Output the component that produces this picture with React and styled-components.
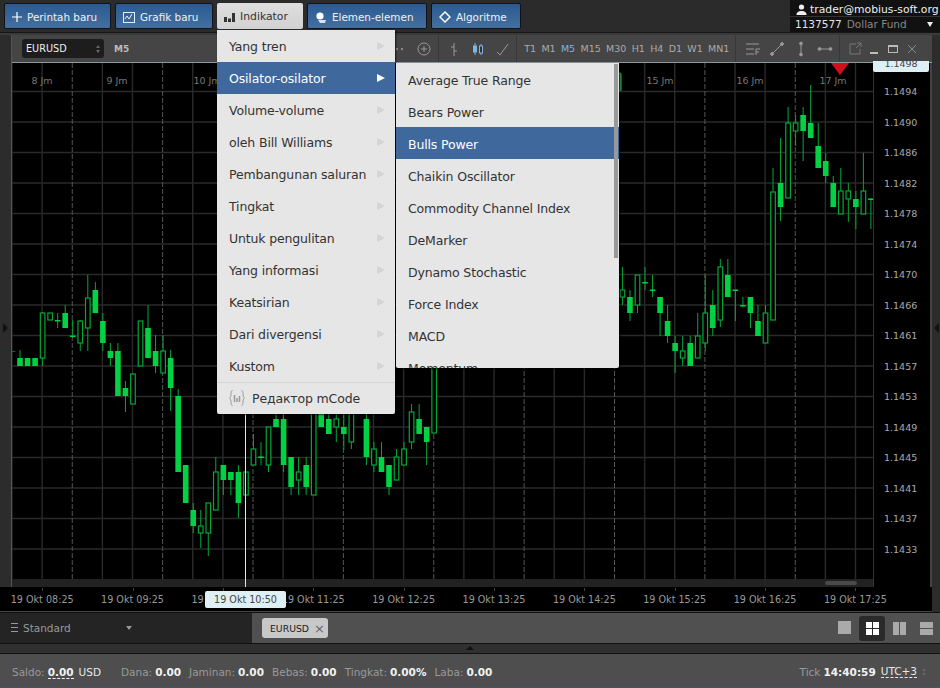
import React from 'react'
import styled, { createGlobalStyle } from 'styled-components'

const GlobalStyle = createGlobalStyle`
  html, body {
    margin: 0;
    padding: 0;
    background: #2a2a2a;
    font-family: "DejaVu Sans", sans-serif;
  }
`;

const Page = styled.div`
  position: relative;
  display: flex;
  flex-direction: column;
  width: 940px;
  height: 688px;
  overflow: hidden;
  background: #2a2a2a;
`;

const TopBar = styled.div`
  display: flex;
  justify-content: space-between;
  height: 33px;
  flex-shrink: 0;
  background: #2b2b2b;
  border-bottom: 1px solid #161616;
  box-sizing: border-box;
`;

const Buttons = styled.div`
  display: flex;
  gap: 4px;
  padding: 3px 0 0 4px;
`;

const TopButton = styled.div`
  display: flex;
  align-items: center;
  gap: 5px;
  box-sizing: border-box;
  width: ${p => p.$w}px;
  height: 26px;
  padding: 1px 0 0 7px;
  font-size: ${p => (p.$active ? '10.8px' : '10.4px')};
  border-radius: 2px;
  color: ${p => (p.$active ? '#333' : '#f0f0f0')};
  background: ${p => (p.$active ? 'linear-gradient(#dedede, #d2d2d2)' : 'linear-gradient(#2a5a92, #44709f)')};
  border: ${p => (p.$active ? 'none' : '1px solid #10131a')};
`;

const Account = styled.div`
  width: 150px;
  height: 32px;
  background: #111;
  color: #eee;
  font-size: 10.8px;
  padding-top: 2px;
  box-sizing: border-box;
`;

const AccountLine = styled.div`
  display: flex;
  align-items: center;
  gap: 3px;
  height: 14px;
  padding-left: ${p => p.$pl}px;
  white-space: nowrap;
  & + & {
    border-top: 1px solid #333;
  }
`;

const AccountId = styled.span`
  font-size: 10.5px;
  color: #e4e4e4;
  margin-right: 2px;
`;

const AccountName = styled.span`
  font-size: 10.5px;
  color: #888;
`;

const AccountCaret = styled.span`
  margin-left: auto;
  margin-right: 7px;
  width: 0;
  height: 0;
  border-left: 3.5px solid transparent;
  border-right: 3.5px solid transparent;
  border-top: 5px solid #eee;
`;

const Workspace = styled.div`
  display: flex;
  flex: 1;
  min-height: 0;
  background: #3a3a3a;
  padding-top: 2px;
  border-bottom: 1px solid #111;
`;

const SideStrip = styled.div`
  display: flex;
  align-items: center;
  justify-content: ${p => (p.$right ? 'flex-end' : 'flex-start')};
  width: ${p => p.$w}px;
  flex-shrink: 0;
  background: #2c2c2c;
  padding: 8px ${p => (p.$right ? '1px' : '3px')} 0;
  box-sizing: border-box;
  ${p => !p.$right && 'border-right: 1px solid #555;'}
`;

const Arrow = styled.span`
  width: 0;
  height: 0;
  border-top: 5px solid transparent;
  border-bottom: 5px solid transparent;
  ${p => (p.$left ? 'border-right: 5px solid #111;' : 'border-left: 5px solid #111;')}
`;

const ChartPanel = styled.div`
  display: flex;
  flex-direction: column;
  flex: 1;
  min-width: 0;
  background: #000;
`;

const Toolbar = styled.div`
  display: flex;
  align-items: center;
  height: 27px;
  flex-shrink: 0;
  background: #454545;
  border-bottom: 1px solid #8a9a9f;
  color: #aaa;
  font-size: 9.5px;
`;

const SymbolSelect = styled.div`
  display: flex;
  align-items: center;
  justify-content: space-between;
  box-sizing: border-box;
  width: 82px;
  height: 19px;
  margin-left: 10px;
  padding: 0 4px;
  border-radius: 3px;
  background: #1d1d1d;
  color: #eee;
  font-size: 9.7px;
`;

const Stepper = styled.span`
  display: flex;
  flex-direction: column;
  gap: 2px;
  margin-left: ${p => p.$ml || 0}px;
  &::before, &::after {
    content: '';
    width: 0;
    height: 0;
    border-left: 2.5px solid transparent;
    border-right: 2.5px solid transparent;
  }
  &::before { border-bottom: 3px solid #666; }
  &::after { border-top: 3px solid #666; }
`;

const Period = styled.span`
  color: ${p => (p.$active ? '#7db4e8' : '#aaa')};
`;

const CurrentPeriod = styled.span`
  margin-left: 10px;
  font-size: 9px;
  font-weight: bold;
  color: #bbb;
`;

const ToolGroup = styled.div`
  display: flex;
  align-items: center;
  height: 100%;
  gap: ${p => p.$gap || 0}px;
  margin-left: ${p => p.$ml || 0}px;
  padding-left: ${p => p.$pl || 0}px;
  border-left: ${p => (p.$sep ? '1px solid #383838' : 'none')};
`;

const ChartRow = styled.div`
  position: relative;
  display: flex;
  height: 524px;
  flex-shrink: 0;
`;

const PlotColumn = styled.div`
  display: flex;
  flex-direction: column;
  width: 861px;
  flex-shrink: 0;
`;

const Canvas = styled.svg`
  display: block;
  width: 861px;
  height: 516px;
  flex-shrink: 0;
`;

const ScrollRow = styled.div`
  position: relative;
  height: 8px;
  background: #222;
`;

const ScrollThumb = styled.div`
  position: absolute;
  right: 16px;
  top: 2px;
  width: 32px;
  height: 4px;
  border-radius: 2px;
  background: #4a4a4a;
`;

const PriceAxis = styled.div`
  display: flex;
  flex-direction: column;
  flex: 1;
  padding: 14px 0 0 10px;
  background: #000;
  border-left: 1px solid #333;
  border-right: 2px solid #444;
`;

const PriceLabel = styled.div`
  height: 30.52px;
  line-height: 30.52px;
  font-size: 9.5px;
  color: #aaa;
`;

const PriceTag = styled.div`
  position: absolute;
  top: -2px;
  right: 3px;
  width: 56px;
  height: 11px;
  overflow: hidden;
  line-height: 6px;
  font-size: 9.5px;
  text-align: center;
  color: #444;
  background: #dff0f5;
  border-radius: 0 0 2px 2px;
`;

const CrossLine = styled.div`
  position: absolute;
  left: 232.5px;
  top: 0;
  bottom: -4px;
  width: 1px;
  background: #e4e4e4;
`;

const TimeAxis = styled.div`
  position: relative;
  display: flex;
  align-items: center;
  flex: 1;
  margin-left: -15px;
  background: #000;
  border-bottom: 1px solid #444;
`;

const TimeLabel = styled.div`
  position: relative;
  width: 90.36px;
  flex-shrink: 0;
  text-align: center;
  font-size: 9.6px;
  color: #999;
  white-space: nowrap;
  &::before {
    content: '';
    position: absolute;
    left: 50%;
    top: -6px;
    width: 1px;
    height: 3px;
    background: #444;
  }
`;

const CrossLabel = styled.div`
  position: absolute;
  left: 208px;
  top: 4px;
  width: 81px;
  height: 17px;
  line-height: 17px;
  font-size: 9.6px;
  text-align: center;
  color: #444;
  background: #dff0f5;
  border-radius: 2px;
`;

const TabBar = styled.div`
  display: flex;
  height: 31px;
  flex-shrink: 0;
  box-sizing: border-box;
  border-bottom: 1px solid #111;
`;

const Layouts = styled.div`
  display: flex;
  align-items: center;
  flex-shrink: 0;
  width: 252px;
  box-sizing: border-box;
  padding-left: 11px;
  gap: 5px;
  background: #242424;
  color: #999;
  font-size: 10.5px;
`;

const Burger = styled.span`
  width: 7px;
  height: 7px;
  border-top: 1px solid #999;
  border-bottom: 1px solid #999;
  position: relative;
  margin-top: -2px;
  &::after {
    content: '';
    position: absolute;
    left: 0;
    right: 0;
    top: 3px;
    height: 1px;
    background: #999;
  }
`;

const Caret = styled.span`
  margin-left: 50px;
  width: 0;
  height: 0;
  border-left: 3.5px solid transparent;
  border-right: 3.5px solid transparent;
  border-top: 4px solid #999;
`;

const TabsArea = styled.div`
  display: flex;
  align-items: center;
  justify-content: space-between;
  flex: 1;
  background: #505050;
  padding: 0 1px 0 10px;
`;

const ChartTab = styled.div`
  display: flex;
  align-items: center;
  gap: 5px;
  box-sizing: border-box;
  width: 66px;
  height: 20px;
  padding-left: 8px;
  border-radius: 3px;
  background: #c8c8c8;
  color: #222;
  font-size: 9.3px;
`;

const TabClose = styled.span`
  color: #666;
  font-size: 13px;
  line-height: 1;
`;

const ViewButtons = styled.div`
  display: flex;
  align-items: center;
  gap: 1px;
`;

const ViewButton = styled.div`
  display: flex;
  align-items: center;
  justify-content: center;
  width: 26px;
  height: 25px;
  border-radius: 3px;
  background: ${p => (p.$active ? '#2a2a2a' : 'transparent')};
`;

const Handle = styled.div`
  display: flex;
  justify-content: center;
  align-items: flex-start;
  height: 10px;
  flex-shrink: 0;
  background: #303030;
  border-bottom: 1px solid #111;
  padding-top: 2px;
  box-sizing: border-box;
  &::before {
    content: '';
    width: 0;
    height: 0;
    border-left: 4px solid transparent;
    border-right: 4px solid transparent;
    border-bottom: 4px solid #111;
  }
`;

const StatusBar = styled.div`
  display: flex;
  align-items: center;
  height: 34px;
  flex-shrink: 0;
  box-sizing: border-box;
  padding: 2px 0 0 12px;
  background: #4e4e4e;
  border-bottom: 1px solid #23607e;
  font-size: 10.5px;
  color: #9a9a9a;
  white-space: nowrap;
`;

const Stat = styled.span`
  margin-right: ${p => p.$mr || 8}px;
`;

const StatValue = styled.b`
  color: #f2f2f2;
  margin-left: 3px;
  ${p => p.$dotted && 'border-bottom: 1px dashed #f2f2f2;'}
`;

const Plain = styled.span`
  color: #e8e8e8;
  margin-left: ${p => p.$ml || 5}px;
  ${p => p.$dotted && 'border-bottom: 1px dashed #e8e8e8;'}
`;

const Clock = styled.div`
  display: flex;
  align-items: center;
  margin-left: auto;
  margin-right: 14px;
`;

const Menu = styled.div`
  position: absolute;
  left: ${p => p.$left}px;
  top: ${p => p.$top}px;
  width: ${p => p.$w}px;
  height: ${p => p.$h}px;
  overflow: hidden;
  background: #e6e6e6;
  border-radius: 0 0 2px 2px;
  box-shadow: 1px 1px 2px rgba(0, 0, 0, 0.7);
`;

const MenuItem = styled.div`
  display: flex;
  align-items: center;
  justify-content: space-between;
  box-sizing: border-box;
  height: 32px;
  padding: ${p => (p.$sub ? 0 : 2)}px 10px 0 12px;
  font-size: 12.5px;
  letter-spacing: -0.15px;
  white-space: nowrap;
  color: ${p => (p.$active ? '#fff' : '#333')};
  background: ${p => (p.$active ? '#3f689c' : 'transparent')};
  &::after {
    ${p => p.$sub && "content: '';"}
    width: 0;
    height: 0;
    border-top: 4px solid transparent;
    border-bottom: 4px solid transparent;
    border-left: 8px solid ${p => (p.$active ? '#fff' : '#d4d4d4')};
  }
`;

const EditorItem = styled.div`
  display: flex;
  align-items: center;
  gap: 7px;
  box-sizing: border-box;
  height: 32px;
  padding: 0 0 1px 12px;
  border-top: 1px solid #d4d4d4;
  font-size: 12.5px;
  letter-spacing: -0.15px;
  color: #333;
`;

const ScrollBar = styled.div`
  position: absolute;
  right: 1px;
  top: 1px;
  width: 4px;
  height: 194px;
  background: #999;
`;

// candles: index, high, body top, body bottom, low, filled
const candles = [
  [0, 351, 351, 351.5, 351, 1], [1, 350, 358, 366, 366, 1], [2, 358, 358, 366, 366, 1], [3, 358, 358, 366, 366, 1],
  [4, 312, 313, 358, 366, 0], [5, 313, 313, 320, 320, 0], [6, 313, 320, 321.5, 328, 1], [7, 305, 313, 328, 328, 1],
  [8, 320, 335.5, 337, 338, 1], [9, 320, 321, 343, 351, 0], [10, 275, 298, 328, 351, 0], [11, 282, 290, 313, 313, 1],
  [12, 313, 321, 343, 351, 1], [13, 343, 351, 358, 366, 1], [14, 343, 351, 396, 396, 1], [15, 381, 388, 396, 412, 1],
  [16, 373, 374, 404, 404, 0], [17, 321, 321, 366, 366, 0], [18, 305, 328, 358, 358, 1], [19, 335, 351, 366, 373, 1],
  [20, 335, 351, 373, 373, 0], [21, 350, 358, 388, 411, 1], [22, 389, 396, 472, 472, 1], [23, 465, 465, 503, 503, 1],
  [24, 503, 510, 526, 533, 1], [25, 510, 526, 533, 548, 0], [26, 503, 503, 533, 556, 0], [27, 457, 472, 510, 510, 0],
  [28, 465, 465, 480, 495, 1], [29, 472, 472, 480, 495, 1], [30, 465, 472, 503, 518, 1], [31, 472, 472, 495, 495, 0],
  [32, 434, 449, 465, 465, 0], [33, 442, 456.5, 458, 465, 1], [34, 427, 427, 465, 472, 0], [35, 413, 419, 427, 427, 1],
  [36, 413, 419, 465, 472, 1], [37, 457, 457, 487, 495, 1], [38, 457, 472, 480, 495, 0], [39, 457, 465, 487, 495, 1],
  [40, 380, 380, 495, 495, 0], [41, 400, 400, 427, 427, 1], [42, 413, 419, 434, 434, 1], [43, 413, 419, 427, 442, 0],
  [44, 413, 427, 434, 450, 1], [45, 380, 380, 442, 449, 0], [47, 400, 419, 457, 465, 1], [48, 442, 449, 465, 472, 0],
  [49, 442, 457, 472, 472, 1], [50, 465, 465, 487, 495, 1], [51, 449, 457, 480, 480, 0], [52, 442, 449, 465, 465, 0],
  [53, 404, 412, 442, 449, 0], [54, 404, 419, 434, 434, 1], [55, 427, 427, 442, 465, 1], [56, 350, 350, 433, 433, 0],
  [81, 267, 290, 297, 305, 0], [82, 290, 297, 313, 321, 1], [83, 275, 275, 305, 313, 0], [84, 267, 282, 283.5, 290, 1],
  [85, 275, 289.5, 291, 297, 1], [86, 297, 297, 313, 336, 1], [87, 305, 321, 336, 343, 1], [88, 336, 343, 351, 373, 1],
  [89, 336, 351, 358, 366, 0], [90, 336, 343, 366, 366, 1], [91, 313, 336, 358, 358, 0], [92, 275, 313, 343, 351, 0],
  [93, 290, 305, 328, 336, 1], [94, 259, 267, 320, 327, 0], [95, 259, 275, 297, 297, 1], [96, 290, 289.5, 291, 321, 1],
  [97, 297, 305, 306.5, 306.5, 1], [98, 297, 297, 313, 328, 1], [99, 305, 321, 336, 336, 1], [100, 305, 313, 343, 343, 0],
  [101, 168, 192, 320, 320, 0], [102, 138, 183, 207, 221, 1], [103, 107, 123, 198, 198, 0], [104, 115, 123, 131, 146, 0],
  [105, 107, 115, 131, 161, 1], [106, 85, 123, 138, 138, 1], [107, 123, 146, 168, 168, 1], [108, 153, 161, 176, 183, 1],
  [109, 176, 183, 207, 207, 1], [110, 168, 191, 214, 214, 0], [111, 183, 191, 199, 222, 0], [112, 191, 199, 207, 229, 1],
  [113, 153, 191, 214, 214, 0], [114, 198, 198.5, 200, 229, 1],
]

const hourLabels = [[42, '8 Jm'], [117, '9 Jm'], [207, '10 Jm'], [660, '15 Jm'], [750, '16 Jm'], [833, '17 Jm']]
const prices = ['1.1494', '1.1490', '1.1486', '1.1482', '1.1478', '1.1474', '1.1470', '1.1466', '1.1461', '1.1457', '1.1453', '1.1449', '1.1445', '1.1441', '1.1437', '1.1433']
const times = ['08:25', '09:25', '10:25', '11:25', '12:25', '13:25', '14:25', '15:25', '16:25', '17:25']
const periods = ['T1', 'M1', 'M5', 'M15', 'M30', 'H1', 'H4', 'D1', 'W1', 'MN1']
const mainMenu = ['Yang tren', 'Osilator-osilator', 'Volume-volume', 'oleh Bill Williams', 'Pembangunan saluran', 'Tingkat', 'Untuk pengulitan', 'Yang informasi', 'Keatsirian', 'Dari divergensi', 'Kustom']
const subMenu = ['Average True Range', 'Bears Power', 'Bulls Power', 'Chaikin Oscillator', 'Commodity Channel Index', 'DeMarker', 'Dynamo Stochastic', 'Force Index', 'MACD', 'Momentum']

function Chart() {
  const vLines = Array.from({ length: 29 }, (_, k) => k)
  const hLines = Array.from({ length: 16 }, (_, k) => 91.5 + 30.5 * k)
  return (
    <Canvas viewBox="12 63 861 516">
      {hLines.map(y => <line key={y} x1="12" x2="873" y1={y} y2={y} stroke="#2a2a2a" strokeWidth="1.4" />)}
      {vLines.map(k => {
        const x = 12 + 30.125 * k
        const dashed = k % 3 === 2
        return <line key={k} x1={x} x2={x} y1="63" y2="579" stroke={dashed ? '#555' : '#2a2a2a'} strokeWidth={dashed ? 1 : 1.4} strokeDasharray={dashed ? '5 2' : undefined} />
      })}
      {candles.map(([i, hi, top, bottom, lo, filled]) => {
        const x = 12.5 + 7.53 * i
        return (
          <g key={i}>
            <line x1={x} x2={x} y1={hi} y2={lo} stroke="#00a838" strokeWidth="1" />
            {filled
              ? <rect x={x - 2.8} y={top} width="5.6" height={bottom - top} fill="#00d244" />
              : <rect x={x - 2.3} y={top} width="4.6" height={bottom - top} fill="#000" stroke="#00a838" strokeWidth="1.2" />}
          </g>
        )
      })}
      <rect x="618" y="73" width="3" height="18" rx="1" fill="#108030" stroke="#30c050" />
      <polygon points="831,63 849,63 840,75" fill="#d0101a" />
      {hourLabels.map(([x, text]) => (
        <text key={text} x={x} y="83.5" textAnchor="middle" fontSize="9.5" fill="#777" fontFamily="DejaVu Sans">{text}</text>
      ))}
    </Canvas>
  )
}

function Toolbars() {
  return (
    <Toolbar>
      <SymbolSelect>EURUSD<Stepper /></SymbolSelect>
      <CurrentPeriod>M5</CurrentPeriod>
      <ToolGroup $ml={261} $gap={2}>
        <svg width="24" height="16" viewBox="0 0 24 16" fill="#888"><circle cx="2" cy="8" r="1.2" /><circle cx="7" cy="8" r="1.2" /><circle cx="12" cy="8" r="1.2" /></svg>
        <svg width="16" height="16" viewBox="0 0 16 16" fill="none" stroke="#999"><circle cx="8" cy="8" r="6" /><path d="M5 8h6M8 5v6" /></svg>
      </ToolGroup>
      <ToolGroup $sep $ml={6} $pl={8} $gap={10}>
        <svg width="14" height="16" viewBox="0 0 14 16" fill="none" stroke="#999"><path d="M7 2v13M4 6h3M7 10h3" /></svg>
        <svg width="14" height="16" viewBox="0 0 14 16" fill="none" stroke="#7db4e8"><path d="M4 2v12M10 3v11" /><rect x="2.5" y="5" width="3" height="6" fill="#7db4e8" /><rect x="8.5" y="5" width="3" height="7" fill="#333" /></svg>
        <svg width="16" height="16" viewBox="0 0 16 16" fill="none" stroke="#999"><path d="M2 11l3 3L13 3" /></svg>
      </ToolGroup>
      <ToolGroup $sep $ml={5} $pl={7} $gap={5.3}>
        {periods.map(p => <Period key={p} $active={p === 'M5'}>{p}</Period>)}
      </ToolGroup>
      <ToolGroup $sep $ml={6} $pl={9} $gap={8}>
        <svg width="16" height="16" viewBox="0 0 16 16" fill="none" stroke="#999"><path d="M1 3h13M1 8h8M1 13h8M11 8v6M11 8h4M11 11h3" /></svg>
        <svg width="16" height="16" viewBox="0 0 16 16" fill="none" stroke="#999"><path d="M3 13L13 3" /><circle cx="3" cy="13" r="1.4" fill="#999" /><circle cx="13" cy="3" r="1.4" fill="#999" /></svg>
        <svg width="16" height="16" viewBox="0 0 16 16" fill="none" stroke="#999"><path d="M8 2v12" /><circle cx="8" cy="2.5" r="1.4" fill="#999" /><circle cx="8" cy="13.5" r="1.4" fill="#999" /></svg>
        <svg width="16" height="16" viewBox="0 0 16 16" fill="none" stroke="#999"><path d="M2 8h12" /><circle cx="2.5" cy="8" r="1.4" fill="#999" /><circle cx="13.5" cy="8" r="1.4" fill="#999" /></svg>
      </ToolGroup>
      <ToolGroup $sep $ml={6} $pl={8} $gap={5}>
        <svg width="14" height="14" viewBox="0 0 14 14" fill="none" stroke="#777"><path d="M8 2H2v10h10V7M8 6l5-5M9 1h4v4" /></svg>
        <svg width="14" height="14" viewBox="0 0 14 14" fill="none" stroke="#bbb" strokeWidth="2"><path d="M3 11h8" /></svg>
        <svg width="14" height="14" viewBox="0 0 14 14" fill="none" stroke="#bbb"><rect x="2.5" y="3.5" width="9" height="7" /><path d="M2.5 4.5h9" /></svg>
        <svg width="14" height="14" viewBox="0 0 14 14" fill="none" stroke="#888"><path d="M3 3l8 8M11 3l-8 8" /></svg>
      </ToolGroup>
    </Toolbar>
  )
}

function App() {
  return (
    <Page>
      <GlobalStyle />
      <TopBar>
        <Buttons>
          <TopButton $w={107}>
            <svg width="10" height="10" viewBox="0 0 10 10" stroke="#fff" strokeWidth="1.2"><path d="M5 0v10M0 5h10" /></svg>
            Perintah baru
          </TopButton>
          <TopButton $w={98}>
            <svg width="12" height="12" viewBox="0 0 12 12" fill="none" stroke="#e8eef5"><rect x="0.5" y="1.5" width="11" height="10" /><path d="M2 8l2-3 2 3 3-5" /></svg>
            Grafik baru
          </TopButton>
          <TopButton $w={86} $active>
            <svg width="11" height="10" viewBox="0 0 11 10" fill="#333"><rect y="5" width="3" height="5" /><rect x="4" y="6.5" width="3" height="3.5" /><rect x="8" y="1" width="3" height="9" /></svg>
            Indikator
          </TopButton>
          <TopButton $w={120}>
            <svg width="12" height="12" viewBox="0 0 12 12" fill="#fff"><circle cx="5" cy="5" r="3.6" /><path d="M3 9h8l-1 3H5z" opacity="0.8" /></svg>
            Elemen-elemen
          </TopButton>
          <TopButton $w={90}>
            <svg width="12" height="12" viewBox="0 0 12 12" fill="none" stroke="#fff" strokeWidth="1.5"><path d="M6 1l5 5-5 5-5-5z" /></svg>
            Algoritme
          </TopButton>
        </Buttons>
        <Account>
          <AccountLine $pl={6}>
            <svg width="11" height="11" viewBox="0 0 11 11" fill="#eee"><circle cx="5.5" cy="3" r="2.6" /><path d="M0.5 11c0-3 2-4 5-4s5 1 5 4z" /></svg>
            trader@mobius-soft.org
          </AccountLine>
          <AccountLine $pl={5}>
            <AccountId>1137577</AccountId>
            <AccountName>Dollar Fund</AccountName>
            <AccountCaret />
          </AccountLine>
        </Account>
      </TopBar>

      <Workspace>
        <SideStrip $w={12}><Arrow /></SideStrip>
        <ChartPanel>
          <Toolbars />
          <ChartRow>
            <PlotColumn>
              <Chart />
              <ScrollRow><ScrollThumb /></ScrollRow>
            </PlotColumn>
            <PriceAxis>
              {prices.map(p => <PriceLabel key={p}>{p}</PriceLabel>)}
            </PriceAxis>
            <PriceTag>1.1498</PriceTag>
            <CrossLine />
          </ChartRow>
          <TimeAxis>
            {times.map(t => <TimeLabel key={t}>19 Okt {t}</TimeLabel>)}
            <CrossLabel>19 Okt 10:50</CrossLabel>
          </TimeAxis>
        </ChartPanel>
        <SideStrip $w={8} $right><Arrow $left /></SideStrip>
      </Workspace>

      <TabBar>
        <Layouts><Burger />Standard<Caret /></Layouts>
        <TabsArea>
          <ChartTab>EURUSD<TabClose>×</TabClose></ChartTab>
          <ViewButtons>
            <ViewButton><svg width="14" height="14" fill="#aaa"><rect width="13" height="13" /></svg></ViewButton>
            <ViewButton $active><svg width="13" height="13" fill="#fff"><rect width="6" height="6" /><rect x="7" width="6" height="6" /><rect y="7" width="6" height="6" /><rect x="7" y="7" width="6" height="6" /></svg></ViewButton>
            <ViewButton><svg width="13" height="13" fill="#aaa"><rect width="6" height="13" /><rect x="7" width="6" height="13" /></svg></ViewButton>
            <ViewButton><svg width="13" height="13" fill="#aaa"><rect width="13" height="6" /><rect y="7" width="13" height="6" /></svg></ViewButton>
          </ViewButtons>
        </TabsArea>
      </TabBar>
      <Handle />

      <StatusBar>
        <Stat $mr={20}>Saldo:<StatValue $dotted>0.00</StatValue><Plain>USD</Plain></Stat>
        <Stat>Dana:<StatValue>0.00</StatValue></Stat>
        <Stat>Jaminan:<StatValue>0.00</StatValue></Stat>
        <Stat>Bebas:<StatValue>0.00</StatValue></Stat>
        <Stat>Tingkat:<StatValue>0.00%</StatValue></Stat>
        <Stat>Laba:<StatValue>0.00</StatValue></Stat>
        <Clock>
          Tick<StatValue>14:40:59</StatValue><Plain $dotted>UTC+3</Plain><Stepper $ml={5} />
        </Clock>
      </StatusBar>

      <Menu $left={217} $top={30} $w={178} $h={384}>
        {mainMenu.map(m => <MenuItem key={m} $sub $active={m === 'Osilator-osilator'}>{m}</MenuItem>)}
        <EditorItem>
          <svg width="16" height="18" viewBox="0 0 16 18" fill="none" stroke="#999"><path d="M3.5 1.5C1 1.5 3 8 0.5 9c2.5 1 0.5 7.5 3 7.5M12.5 1.5C15 1.5 13 8 15.5 9c-2.5 1-0.5 7.5-3 7.5" /><path d="M5.5 6v7M8 9v4M10.5 7v6" strokeWidth="1.5" /></svg>
          Редактор mCode
        </EditorItem>
      </Menu>
      <Menu $left={396} $top={63} $w={223} $h={305}>
        {subMenu.map(m => <MenuItem key={m} $active={m === 'Bulls Power'}>{m}</MenuItem>)}
        <ScrollBar />
      </Menu>
    </Page>
  )
}

export default App
